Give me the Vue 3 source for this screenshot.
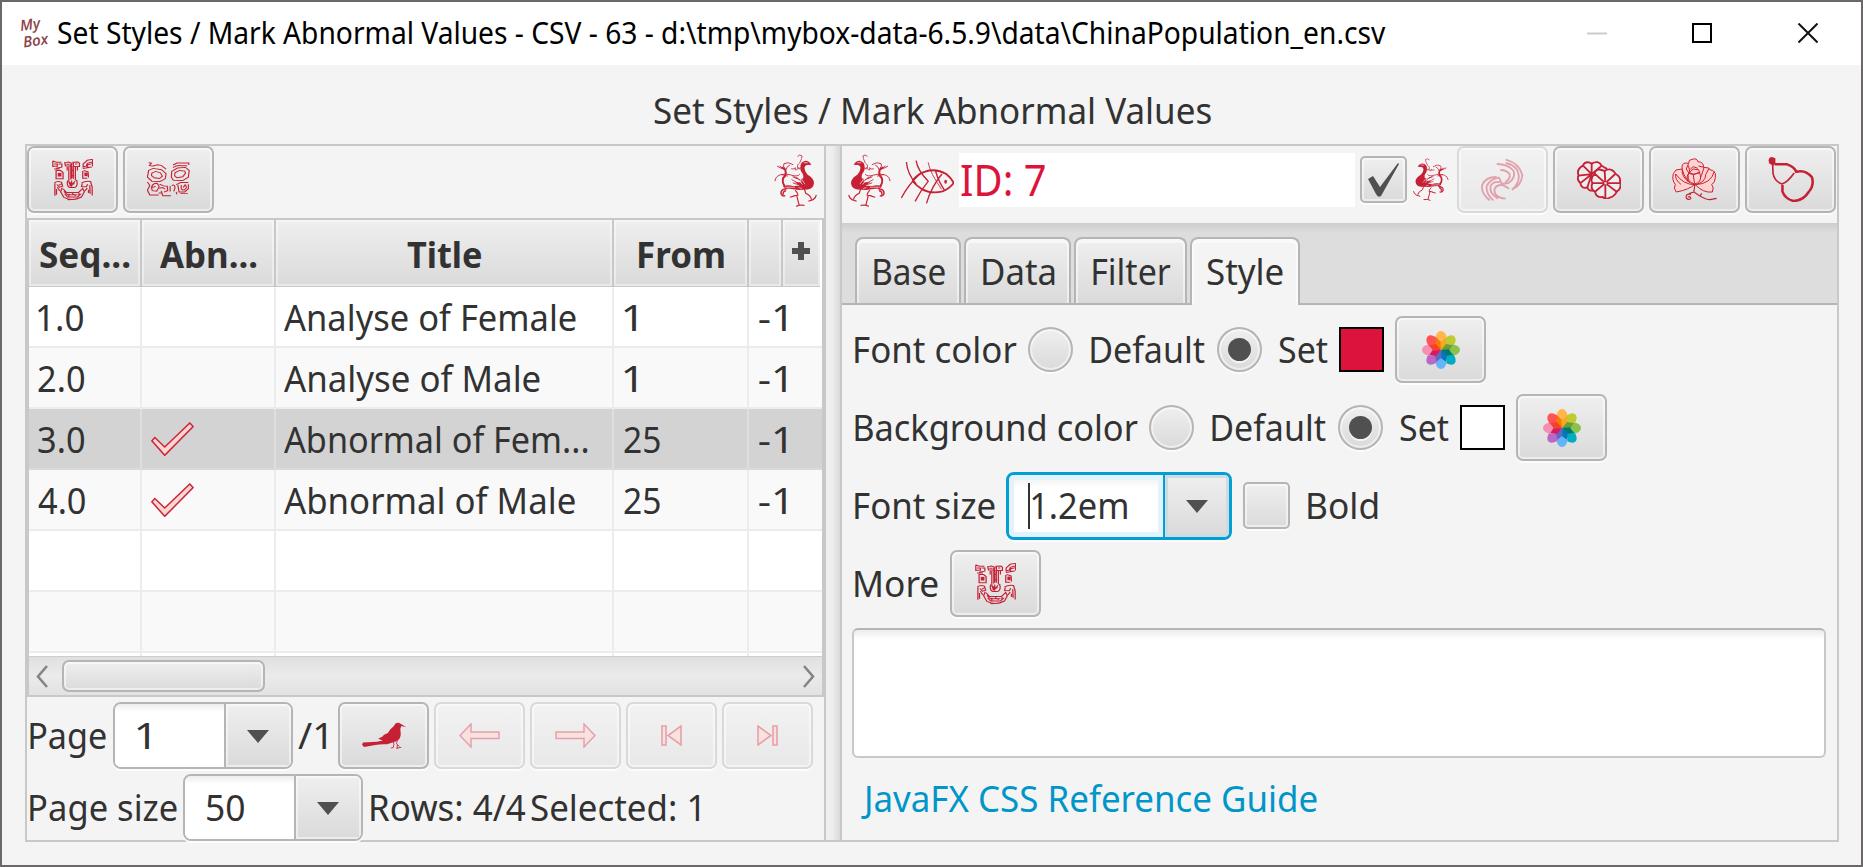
<script setup>
import { h } from 'vue'

const FAMILY = '"Noto Sans", "Open Sans", sans-serif'
const ctx = document.createElement('canvas').getContext('2d')

// Label whose visible glyphs fill exactly `w` pixels horizontally.
const Txt = (props) => {
  const size = props.size || 36
  const weight = props.bold ? 700 : 400
  ctx.font = `${weight} ${size}px ${FAMILY}`
  const m = ctx.measureText(props.t)
  const k = props.w / (m.actualBoundingBoxLeft + m.actualBoundingBoxRight)
  return h('span', {
    style: { display: 'inline-block', width: props.w + 'px', flex: 'none', whiteSpace: 'pre', fontSize: size + 'px', fontWeight: weight }
  }, [
    h('span', {
      style: { display: 'inline-block', transformOrigin: '0 50%', transform: `scaleX(${k}) translateX(${m.actualBoundingBoxLeft}px)` }
    }, props.t)
  ])
}
Txt.props = { t: String, w: Number, size: Number, bold: Boolean }

const rows = [
  { seq: '1.0', sw: 45, ok: false, title: 'Analyse of Female', tw: 292, from: '1', fw: 12, sel: false },
  { seq: '2.0', sw: 46, ok: false, title: 'Analyse of Male', tw: 256, from: '1', fw: 12, sel: false },
  { seq: '3.0', sw: 46, ok: true, title: 'Abnormal of Fem...', tw: 304, from: '25', fw: 36, sel: true },
  { seq: '4.0', sw: 47, ok: true, title: 'Abnormal of Male', tw: 291, from: '25', fw: 36, sel: false },
  { seq: '' },
  { seq: '' }
]
const tabs = [
  { t: 'Base', w: 71, full: 106 },
  { t: 'Data', w: 72, full: 107 },
  { t: 'Filter', w: 78, full: 113 },
  { t: 'Style', w: 76, full: 110, on: true }
]
const petals = [
  ['#ffb74d', 0], ['#c0ca33', 45], ['#8bc34a', 90], ['#00acc1', 135],
  ['#64b5f6', 180], ['#ba68c8', 225], ['#f48fb1', 270], ['#ff5252', 315]
]
const overlaps = ['#f57c00', '#f9a825', '#689f38', '#00796b', '#0277bd', '#5c6bc0', '#d81b60', '#f4402c']
</script>

<template>
  <div class="window">
    <svg class="defs" width="0" height="0">
      <symbol id="face" viewBox="125 476 100 127" preserveAspectRatio="none">
        <g fill="none" stroke="#c62035" stroke-width="3">
          <path d="M127 481 V500 M127 482 L136 486 L148 486 M130 491 H138 V498 H128 M141 491 H149 V502 M135 504 L148 501 M130 506 H144"/>
          <path d="M156 487 L165 485 L172 488 V497 H158 Z M160 492 H168 M176 486 L188 485 L192 489 V499 H178 Z M181 491 H187"/>
          <path d="M166 499 V545 M171 490 V538 M177 488 V536 M182 500 V541 M187 497 V511 M162 500 V511 M171 511 H178 M170 527 H179"/>
          <path d="M163 541 Q160 558 168 562 H181 Q189 557 185 539 M167 545 L174 554 L181 543 M168 556 L180 550 M173 541 V560"/>
          <path d="M224 477 L211 480 L201 491 V500 L209 497 L211 489 L222 485 M223 490 L211 494 V501 H221 M200 505 L222 500 M224 477 V499"/>
          <path d="M135 511 V536 H152 V517 L146 511 Z M200 512 V534 H211 M202 511 L213 515 L214 532"/>
          <path d="M131 548 Q137 541 148 546 L151 558 L143 561 L137 553 M132 549 V587 M138 561 L144 573 M136 567 L136 584 M148 551 L142 555"/>
          <path d="M197 548 Q207 541 219 544 L223 561 V586 M199 550 L197 559 L209 560 L212 552 M211 564 L205 573 M217 555 L218 581 M214 569 V579"/>
          <path d="M150 563 L146 575 L154 592 Q175 606 197 591 L204 575 L199 563 M152 566 L160 577 H190 L199 566 M156 581 L163 591 H187 L196 581 M154 574 L163 584 H187 M166 581 V590 M174 580 L183 587 M191 579 L190 590 M163 599 L185 598"/>
        </g>
        <g fill="#c62035"><rect x="139" y="518" width="9" height="11"/><rect x="204" y="517" width="8" height="11"/><path d="M164 544L177 551L170 560ZM171 497H175V535H171Z"/></g>
      </symbol>

      <symbol id="eyes" viewBox="360 488 106 104" preserveAspectRatio="none">
        <g fill="none" stroke="#c62035" stroke-width="2.800">
          <path d="M364 490 L371 491 L366 499 L375 500 L386 496 L395 498 L407 509 M424 497 L434 491 H463 V497 M424 505 Q432 497 446 499 H459"/>
          <path d="M364 513 L375 507 L396 511 L407 523 L405 538 L392 546 L372 545 L361 533 Z M372 521 L381 516 L393 520 L398 530 L391 537 L378 535 L371 528 Z"/>
          <path d="M421 516 L435 506 L455 504 L464 513 L462 533 L448 543 L425 542 L420 533 Z M429 520 L440 513 L453 515 L455 521 L448 532 L434 535 L428 529 Z"/>
          <path d="M361 547 L367 558 L361 572 L367 586 H389 M371 566 Q372 551 385 551 L390 561 L384 575 L373 573 L371 564 L381 561 M389 580 H396"/>
          <path d="M391 554 L401 559 L410 560 L411 573 L402 577 M390 566 L399 564 L405 569 M395 574 L399 588 H419 M417 559 V576 M421 558 Q429 553 429 565 L426 575"/>
          <path d="M432 555 L443 549 H462 M436 556 L439 577 L453 577 L462 568 V554 M445 557 Q441 572 452 571 Q461 564 454 556 L449 564 M432 577 L434 584 M442 582 H461"/>
        </g>
      </symbol>

      <symbol id="phoenix" viewBox="27 25 130 158" preserveAspectRatio="none">
        <path fill="#c62035" d="M107 60 Q108 48 122 45 Q133 45 140 57 L128 58 Q121 57 119 66 Q119 74 128 86 Q148 98 148 112 Q146 128 129 131 L103 132 L62 127 L58 121 L105 120 L90 109 L111 109 L108 99 L115 98 Q118 87 109 77 Q105 69 107 60Z"/>
        <g fill="none" stroke="#c62035">
          <path stroke-width="6" d="M65 128 Q49 112 55 96 Q66 88 61 72 L50 65"/>
          <path stroke-width="2.7" d="M36 61 Q47 69 60 68 Q53 62 57 54 L70 51 L85 57 M44 61 L54 68 M62 73 Q67 60 75 58 M30 106 Q31 92 46 87 Q64 82 80 88 Q98 94 105 85 M48 86 L69 91 M87 91 Q91 98 99 97"/>
          <path stroke-width="2.5" d="M79 69 Q86 72 92 66 Q88 78 99 69 Q96 59 101 54 M104 53 L110 40 M98 32 L105 28 L112 31 L110 39 M107 67 L102 70 L102 64"/>
          <path stroke-width="4.5" d="M56 123 Q73 117 91 125 M67 128 Q47 130 48 143 Q53 153 61 149 M63 134 Q51 139 56 146"/>
          <path stroke-width="3.5" d="M91 133 Q100 143 99 148 L87 149 M96 150 L103 178 M94 181 L105 177 L119 178 M119 130 L123 142 Q138 149 140 160 M131 166 L145 161 Q154 156 155 147 M89 150 L75 154"/>
          <path stroke-width="2.5" d="M83 93 L106 102 M80 101 L106 115 M84 111 L107 119 M95 95 L119 115"/>
        </g>
        <g fill="none" stroke="#f4f4f4" stroke-width="2"><path d="M100 101 L113 116 M108 97 L121 115 M61 124 L91 124 M101 125 L111 128 M117 51 H129"/></g>
      </symbol>

      <symbol id="fish" viewBox="408 42 158 132" preserveAspectRatio="none">
        <g fill="none" stroke="#c62035" stroke-width="4">
          <path d="M442 105 Q456 84 480 77 Q512 66 543 84 Q559 97 565 111 Q554 127 532 136 Q496 144 471 130 Q456 121 442 105" stroke-width="5.5"/>
          <path d="M424 48 Q427 83 453 114 M409 156 Q430 115 465 83 M453 44 Q457 72 489 106 Q467 132 450 166 M530 84 Q498 123 484 172 M511 75 Q520 107 538 133"/>
          <path d="M489 49 Q494 80 529 130 M469 82 L490 106" stroke-width="2.5"/>
        </g>
        <ellipse cx="541" cy="107" rx="4" ry="6" fill="#c62035"/>
      </symbol>

      <symbol id="swirl" viewBox="125 55 129 126" preserveAspectRatio="none">
        <g fill="none" stroke="#e2a1aa" stroke-width="5.5">
          <path d="M199 57 Q240 67 249 104 Q245 136 218 146 M218 148 Q249 119 233 87 Q223 72 199 67"/>
          <path d="M172 70 Q208 71 223 91 Q229 114 207 127 L188 130 M183 88 Q203 88 211 101 Q214 114 198 124"/>
          <path d="M151 179 Q123 157 129 132 Q140 108 172 109 M162 179 Q139 159 142 136 Q151 116 179 111 L189 132"/>
          <path d="M176 174 Q148 158 154 136 Q162 120 184 125 M199 174 Q165 171 165 147 Q169 132 190 133 L209 144"/>
        </g>
      </symbol>

      <symbol id="citrus" viewBox="409 65 132 115" preserveAspectRatio="none">
        <g fill="#ededed" stroke="#c62035" stroke-width="5.5">
          <path d="M453 105 L427 79 Q431 67 445 69 L453 73 Q473 61 483 79 L490 84 Q505 88 499 105 L490 129 L461 153 Q445 159 440 145 Q422 151 419 132 Q407 120 414 109 Q406 91 427 79"/>
          <path d="M453 105 V73 M453 105 L483 79 M453 105 L413 109 M453 105 L419 132 M453 105 L440 145"/>
          <path d="M494 132 L463 104 Q460 94 475 90 L492 95 Q507 85 519 96 L526 105 Q540 112 538 127 Q544 148 529 157 Q520 174 507 176 Q496 183 486 174 Q467 177 463 158 Q448 151 455 132 Q447 115 463 104"/>
          <path d="M494 132 L492 95 M494 132 L523 105 M494 132 H538 M494 132 L528 158 M494 132 V177 M494 132 L463 158 M494 132 H455"/>
        </g><rect x="490" y="128" width="9" height="9" fill="#ddd" stroke="#c62035" stroke-width="2"/>
      </symbol>

      <symbol id="peony" viewBox="696 56 136 129" preserveAspectRatio="none">
        <g fill="#ffd3cf" stroke="#c62035" stroke-width="3">
          <path d="M765 135 Q748 151 709 158 Q699 147 706 135 Q695 123 700 103 L708 92 L727 89 Q723 72 738 71 L746 72 Q746 60 757 60 Q772 55 774 67 Q793 68 791 84 L807 86 Q809 94 819 93 Q831 101 827 115 Q826 130 816 136 Q824 145 818 158 Q791 162 765 135Z"/>
          <path d="M765 136 Q730 136 707 104 Q704 121 723 135 M763 136 Q735 125 727 90 Q723 112 750 130 M766 136 Q797 130 798 106 L808 87 M766 136 Q814 134 824 96 M777 128 Q785 111 793 84 L776 80 M744 127 Q737 109 750 99 L746 79 M746 73 L739 89 L748 102"/>
          <path d="M747 100 Q740 118 753 130 Q765 137 776 130 Q787 117 779 99 L762 105 Z M748 101 L759 89 L776 91 L780 101 M747 101 Q752 105 762 105 L778 101 M751 90 L760 82 L774 87 M760 105 L764 132"/>
        </g>
        <path d="M765 137 L762 158 L779 169 Q800 181 811 181 L831 177 M762 158 L747 163 M753 165 Q736 162 739 176 Q746 184 753 177 Q750 168 744 174 M781 169 L786 162" fill="none" stroke="#c62035" stroke-width="3.5"/>
      </symbol>

      <symbol id="gourd" viewBox="983 51 137 135" preserveAspectRatio="none">
        <path d="M985 61 Q985 52 995 51 L1005 55 V71 L998 77 L986 70Z" fill="#c62035"/>
        <path d="M1003 73 L1040 73 Q1061 80 1067 95 Q1096 88 1114 112 Q1121 137 1104 156 Q1088 182 1059 183 Q1035 178 1026 155 V135" fill="none" stroke="#c62035" stroke-width="7.500"/>
        <path d="M997 74 L998 101 Q1003 125 1025 132 Q1042 126 1061 99" fill="none" stroke="#c62035" stroke-width="5"/>
      </symbol>

      <symbol id="crow" viewBox="1085 305 131 79" preserveAspectRatio="none">
        <path fill="#c62035" d="M1180 317 Q1184 306 1194 307 L1204 312 L1216 320 L1202 317 Q1198 323 1200 335 Q1203 354 1187 361 L1160 370 Q1140 369 1125 372 L1091 378 L1085 371 L1088 365 L1130 363 L1147 359 L1133 354 L1145 348 L1151 342 L1162 337 L1169 327 Z"/>
        <path d="M1178 359 L1180 370 L1178 380 L1171 381 M1190 358 L1188 369 L1197 377 M1190 371 V383 M1187 382 L1202 379" stroke="#c62035" stroke-width="2.5" fill="none"/>
      </symbol>

      <symbol id="flower" viewBox="-19 -19 38 38">
        <ellipse v-for="p in petals" :key="p[1]" cx="0" cy="-11" rx="5.6" ry="8" :fill="p[0]" :transform="`rotate(${p[1]})`"/>
        <path v-for="(c, i) in overlaps" :key="c" d="M0 0 L-3.600 -7 L0 -12.500 L3.600 -7Z" :fill="c" :transform="`rotate(${i * 45 - 22.5})`"/>
      </symbol>
      <symbol id="tick" viewBox="453 667 129 103">
        <path d="M455 724 L464 714 L494 743 L570 670 L580 681 L494 768 Z" fill="#ffd5cf" stroke="#c9253c" stroke-width="4.5"/>
      </symbol>
      <symbol id="arrow" viewBox="0 0 41 25">
        <path d="M1 12.5 L12 1 V9 H40 V15.5 H12 V24 Z" fill="#f8e2e0" stroke="#e6a0a8" stroke-width="1.5"/>
      </symbol>
      <symbol id="first" viewBox="0 0 21 21">
        <path d="M1 1 H5 V20 H1 Z M20 1 V20 L7 10.5 Z" fill="#f8e2e0" stroke="#e6a0a8" stroke-width="1.6"/>
      </symbol>
    </svg>

    <header class="titlebar">
      <div class="logo"><span>My</span><span class="lower">Box</span></div>
      <Txt t="Set Styles / Mark Abnormal Values - CSV - 63 - d:\tmp\mybox-data-6.5.9\data\ChinaPopulation_en.csv" :w="1328" :size="30"/>
      <svg class="winctl" width="231" height="20" viewBox="0 0 231 20">
        <path d="M0 10.5 H20" stroke="#ccc" stroke-width="2"/>
        <rect x="106" y="1" width="18" height="18" fill="none" stroke="#000" stroke-width="2"/>
        <path d="M211.500 .5 L230.500 19.500 M230.500 .5 L211.500 19.500" stroke="#111" stroke-width="2"/>
      </svg>
    </header>
    <i class="edge"></i>

    <h1><Txt t="Set Styles / Mark Abnormal Values" :w="557"/></h1>

    <main>
      <section class="left">
        <div class="toolbar">
          <button><svg width="41" height="42"><use href="#face"/></svg></button>
          <button><svg width="43" height="35"><use href="#eyes"/></svg></button>
          <svg class="end" width="43" height="53"><use href="#phoenix"/></svg>
        </div>
        <div class="table">
          <div class="tr head">
            <div><Txt t="Seq..." :w="90" bold/></div>
            <div><Txt t="Abn..." :w="97" bold/></div>
            <div><Txt t="Title" :w="74" bold/></div>
            <div><Txt t="From" :w="85" bold/></div>
            <div></div>
            <div class="plus"><svg width="18" height="18"><path d="M6 0H12V6H18V12H12V18H6V12H0V6H6Z" fill="#505050"/></svg></div>
          </div>
          <div v-for="(r, i) in rows" :key="i" class="tr" :class="{ odd: i % 2, sel: r.sel }">
            <div><Txt v-if="r.seq" :t="r.seq" :w="r.sw"/></div>
            <div><svg v-if="r.ok" width="43" height="34"><use href="#tick"/></svg></div>
            <div><Txt v-if="r.title" :t="r.title" :w="r.tw"/></div>
            <div><Txt v-if="r.from" :t="r.from" :w="r.fw"/></div>
            <div><Txt v-if="r.seq" t="-1" :w="27"/></div>
          </div>
          <div class="strip"><i></i><i></i><i></i><i></i><i></i></div>
          <div class="scroll">
            <svg width="12" height="23" viewBox="0 0 12 23"><path d="M11 1 L2 11.500 L11 22" fill="none" stroke="#858585" stroke-width="2.600"/></svg>
            <div class="thumb"></div>
            <svg class="end" width="12" height="23" viewBox="0 0 12 23"><path d="M1 1 L10 11.500 L1 22" fill="none" stroke="#858585" stroke-width="2.600"/></svg>
          </div>
        </div>
        <div class="pager">
          <Txt t="Page" :w="76"/>
          <div class="combo"><div class="val one"><Txt t="1" :w="12"/></div><div class="drop"><b></b></div></div>
          <Txt t="/1" :w="28"/>
          <div class="btns">
            <button><svg width="44" height="27"><use href="#crow"/></svg></button>
            <button class="off"><svg width="41" height="25"><use href="#arrow"/></svg></button>
            <button class="off"><svg class="flip" width="41" height="25"><use href="#arrow"/></svg></button>
            <button class="off"><svg width="21" height="21"><use href="#first"/></svg></button>
            <button class="off"><svg class="flip" width="21" height="21"><use href="#first"/></svg></button>
          </div>
        </div>
        <div class="pager second">
          <Txt t="Page size" :w="147"/>
          <div class="combo"><div class="val"><Txt t="50" :w="37"/></div><div class="drop"><b></b></div></div>
          <Txt t="Rows: 4/4" :w="154"/>
          <Txt t="Selected: 1" :w="168"/>
        </div>
      </section>

      <div class="divider"></div>

      <section class="right">
        <div class="toolbar idbar">
          <svg class="flip" width="43" height="53"><use href="#phoenix"/></svg>
          <svg width="53" height="44"><use href="#fish"/></svg>
          <div class="idfield"><Txt t="ID: 7" :w="84" :size="43"/></div>
          <div class="check on"><svg width="31" height="34" viewBox="0 0 31 34"><path d="M0 16 L5 13 L12 24 L30 0 L31 1 L13 33 Q10 35 8 31 Z" fill="#505050"/></svg></div>
          <svg class="flip small" width="36" height="43"><use href="#phoenix"/></svg>
          <div class="btns">
            <button class="off"><svg width="43" height="42"><use href="#swirl"/></svg></button>
            <button><svg width="44" height="38"><use href="#citrus"/></svg></button>
            <button><svg width="45" height="43"><use href="#peony"/></svg></button>
            <button><svg width="46" height="45"><use href="#gourd"/></svg></button>
          </div>
        </div>
        <nav class="tabs">
          <div v-for="t in tabs" :key="t.t" class="tab" :class="{ on: t.on }" :style="{ width: t.full + 'px' }"><Txt :t="t.t" :w="t.w"/></div>
        </nav>
        <div class="form">
          <div class="row">
            <Txt t="Font color" :w="162"/>
            <span class="radio"></span><Txt class="opt" t="Default" :w="114"/>
            <span class="radio"><i></i></span><Txt class="set" t="Set" :w="49"/>
            <span class="swatch red"></span>
            <button><svg width="38" height="38"><use href="#flower"/></svg></button>
          </div>
          <div class="row">
            <Txt t="Background color" :w="283"/>
            <span class="radio"></span><Txt class="opt" t="Default" :w="114"/>
            <span class="radio"><i></i></span><Txt class="set" t="Set" :w="49"/>
            <span class="swatch"></span>
            <button><svg width="38" height="38"><use href="#flower"/></svg></button>
          </div>
          <div class="row">
            <Txt t="Font size" :w="140"/>
            <div class="combo focus"><div class="val"><i class="caret"></i><Txt t="1.2em" :w="95"/></div><div class="drop"><b></b></div></div>
            <div class="check"></div>
            <Txt class="bold" t="Bold" :w="70"/>
          </div>
          <div class="row">
            <Txt t="More" :w="83"/>
            <button class="more"><svg width="41" height="42"><use href="#face"/></svg></button>
          </div>
          <div class="area"></div>
          <a class="link"><Txt t="JavaFX CSS Reference Guide" :w="456"/></a>
        </div>
      </section>
    </main>
  </div>
</template>

<style>
body { margin: 0; overflow: hidden; }
</style>

<style scoped>
* { box-sizing: border-box; }
.window {
  position: relative; width: 1863px; height: 867px; border: 2px solid #6a6868;
  background: #f4f4f4; font: 36px/48px "Noto Sans", "Open Sans", sans-serif; color: #323232; overflow: hidden;
}
svg { flex: none; display: block; }
.defs { position: absolute; }
.flip { transform: scaleX(-1); }
.end { margin-left: auto; }
.edge { position: absolute; right: -2px; top: 70px; width: 2px; height: 126px; background: #161616; }

.titlebar { height: 63px; background: #fff; display: flex; align-items: center; color: #000; padding: 0 43px 0 18px; }
.titlebar > span { margin-top: -1px; }
.logo { width: 38px; height: 34px; font: italic 600 15px/17px "Open Sans", sans-serif; color: #8d4347; display: flex; flex-direction: column; }
.logo span { transform: rotate(-8deg); transform-origin: 0 50%; }
.logo .lower { padding-left: 3px; }
.winctl { margin-left: auto; margin-top: -1px; }

h1 { margin: 0; height: 79px; font-weight: 400; font-size: 36px; padding: 22px 0 0 652px; line-height: 48px; display: flex; }

main { display: flex; height: 698px; width: 1814px; margin-left: 23px; border: 2px solid #c8c8c8; }
.left { width: 799px; border-right: 2px solid #c8c8c8; }
.divider { width: 14px; background: linear-gradient(90deg, #f0f0f0, #eee 45%, #d9d9d9); }
.right { flex: 1; border-left: 2px solid #c8c8c8; }

.toolbar { display: flex; gap: 5px; height: 72px; align-items: flex-start; }
.toolbar .end { margin: 8px 7px 0 auto; }
button {
  width: 91px; height: 67px; padding: 0; flex: none; display: flex; align-items: center; justify-content: center;
  border: 2px solid #b5b5b5; border-radius: 7px; background: linear-gradient(#efefef, #dadada);
  box-shadow: inset 0 0 0 2px rgba(255,255,255,.5), 0 2px 0 #fcfcfc;
}
button.off { border-color: #d9d9d9; background: linear-gradient(#f2f2f2, #e8e8e8); }

.table { height: 479px; border: 2px solid #c8c8c8; width: 797px; background: #fff; overflow: hidden; }
.tr { display: grid; grid-template-columns: 113px 134px 338px 135px 73px; height: 61px; border-bottom: 2px solid #ececec; }
.tr > div { border-right: 2px solid #ececec; display: flex; align-items: center; padding-top: 3px; }
.tr > div:nth-child(1) { padding-left: 9px; }
.tr > div:nth-child(2) { padding-left: 9px; }
.tr > div:nth-child(3) { padding-left: 8px; }
.tr > div:nth-child(4) { padding-left: 10px; }
.tr > div:nth-child(5) { border-right: 0; padding-left: 10px; }
.tr > div > svg { margin-top: -2px; }
.tr.odd { background: #f9f9f9; }
.tr.sel { background: #d3d3d3; border-bottom-color: #dadada; }
.tr.sel > div { border-color: #dedede; }
.tr.head { grid-template-columns: 113px 134px 338px 135px 34px 37px; height: 67px; border-bottom: 1px solid #c8c8c8; width: 791px; }
.tr.head > div { padding: 3px 0 0; justify-content: center; border-right: 2px solid #c8c8c8; background: linear-gradient(#efefef, #dadada); box-shadow: inset 0 0 0 2px rgba(255,255,255,.4); }
.tr.head > div:nth-child(1) { padding-left: 1px; }
.tr.head > div:nth-child(2) { padding-left: 1px; }
.tr.head > div:nth-child(3) { padding-right: 1px; }
.tr.head > div:nth-child(4) { padding-left: 1px; }
.tr.head > div.plus { border: 0; padding: 0 2px 2px 0; }
.strip { height: 3px; display: grid; grid-template-columns: 113px 134px 338px 135px 73px; }
.strip i { border-right: 2px solid #ececec; }
.strip i:last-child { border: 0; }
.scroll { height: 39px; border-top: 1px solid #cdcdcd; background: linear-gradient(#e0e0e0, #ebebeb 50%, #e2e2e2); display: flex; align-items: center; padding: 0 7px; }
.thumb { width: 203px; height: 32px; margin-left: 14px; border: 2px solid #b5b5b5; border-radius: 7px; background: linear-gradient(#efefef, #dadada); box-shadow: inset 0 0 0 2px rgba(255,255,255,.5); }

.pager { display: flex; align-items: center; margin-top: 5px; height: 67px; padding-left: 3px; }
.pager > .combo { margin: 0 5px 0 7px; }
.pager .btns { margin-left: 12px; }
.btns { display: flex; gap: 5px; }
.pager.second .combo { margin: 0 8px 0 6px; }
.pager.second > span:last-child { margin-left: 6px; }
.combo { display: flex; height: 67px; width: 180px; border: 2px solid #b5b5b5; border-radius: 8px; background: #fff; box-shadow: 0 2px 0 #fcfcfc; overflow: hidden; }
.val { flex: 1; display: flex; align-items: center; padding-left: 22px; background: linear-gradient(#ededed, #fff 8px); }
.drop { width: 67px; border-left: 2px solid #b5b5b5; background: linear-gradient(#efefef, #dadada); box-shadow: inset 0 0 0 2px rgba(255,255,255,.5); display: flex; align-items: center; justify-content: center; }
.drop b { border: 11.5px solid transparent; border-top: 13px solid #505050; border-bottom: 0; margin-top: 2px; margin-right: 1px; }

.idbar { height: 77px; gap: 0; padding-left: 6px; }
.idbar > .flip:first-child { margin: 8px 10px 0 0; }
.idbar > svg:nth-child(2) { margin: 14px 5px 0 0; }
.idfield { width: 396px; height: 54px; margin: 7px 5px 0 0; background: #fff; color: #dc143c; padding-left: 2px; display: flex; align-items: center; }
.idfield span { line-height: 54px; }
.idbar .check { margin-top: 10px; }
.small { margin: 12px 8px 0 6px; }

.tabs { height: 82px; display: flex; gap: 3px; align-items: flex-start; padding: 14px 0 0 13px; border-bottom: 2px solid #b5b5b5; background: linear-gradient(#cdcdcd, #ddd 10px); }
.tab { height: 66px; border: 2px solid #b5b5b5; border-bottom: 0; border-radius: 8px 8px 0 0; background: linear-gradient(#efefef, #dadada); box-shadow: inset 0 2px 0 2px rgba(255,255,255,.5); display: flex; align-items: center; justify-content: center; padding-top: 2px; padding-left: 2px; }
.tab.on { height: 68px; background: #f4f4f4; padding: 0; }

.form { padding: 11px 11px 0 10px; }
.row { display: flex; align-items: center; height: 67px; margin-bottom: 11px; gap: 11px; padding-left: 3px; }
.radio { width: 45px; height: 45px; flex: none; margin-right: 7px; border-radius: 50%; border: 2px solid #b5b5b5; background: linear-gradient(#efefef, #dadada); box-shadow: inset 0 0 0 2px rgba(255,255,255,.5), 0 2px 0 #fcfcfc; display: flex; align-items: center; justify-content: center; }
.radio i { width: 23px; height: 23px; border-radius: 50%; background: #505050; box-shadow: 0 2px 0 #f4f4f4; }
.opt { margin-right: 1px; }
.set { margin-left: -1px; }
.swatch { width: 45px; height: 45px; border: 2px solid #000; background: #fff; flex: none; }
.red { background: #dc143c; }
.combo.focus { width: 226px; height: 68px; border: 3px solid #039ed3; }
.focus .val { padding-left: 14px; border: 5px solid #e1f3fb; background: linear-gradient(#f4f4f4, #fff 8px); }
.focus .drop { width: 66px; border-color: #039ed3; box-shadow: inset 0 0 0 3px #cbdde3; }
.caret { width: 2px; height: 46px; background: #323232; margin-right: 2px; flex: none; }
.check { width: 47px; height: 47px; flex: none; border: 2px solid #b5b5b5; border-radius: 5px; background: linear-gradient(#efefef, #dadada); box-shadow: inset 0 0 0 2px rgba(255,255,255,.5), 0 2px 0 #fcfcfc; display: flex; align-items: center; justify-content: center; }
.bold { margin-left: 7px; }
.area { width: 974px; height: 130px; border: 2px solid #c8c8c8; border-top-color: #b5b5b5; border-radius: 6px; background: linear-gradient(#ebebeb, #fff 9px); }
.link { display: block; color: #0096c9; padding-left: 9px; margin-top: 17px; height: 48px; }
.more { margin-left: 1px; }
</style>
